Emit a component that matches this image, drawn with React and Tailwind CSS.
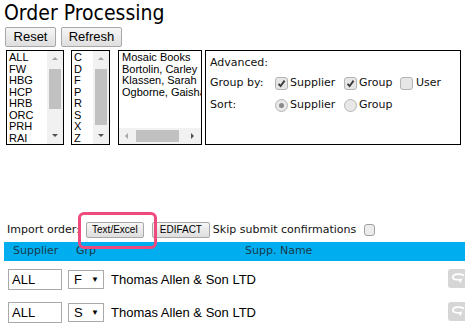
import React from 'react';

const tahoma = { fontFamily: '"DejaVu Sans Condensed", "DejaVu Sans", sans-serif' };
const verdana = { fontFamily: '"DejaVu Sans", sans-serif' };
const arial = { fontFamily: '"Liberation Sans", Arial, sans-serif' };

const Arrow = ({ dir }) => {
  const pts = {
    up: '1,5 4,2 7,5',
    down: '1,2 4,5 7,2',
    left: '5,1 2,4 5,7',
    right: '2,1 5,4 2,7',
  }[dir];
  return (
    <svg width="8" height="8" viewBox="0 0 8 8">
      <polygon points={pts} fill={dir === 'up' || dir === 'left' ? '#a3a3a3' : '#505050'} />
    </svg>
  );
};

const VScroll = ({ thumbTop, thumbHeight }) => (
  <div className="w-[16px] h-full bg-[#f1f1f1] flex flex-col items-center">
    <div className="h-[16px] flex items-center justify-center"><Arrow dir="up" /></div>
    <div className="flex-1 w-full relative">
      <div
        className="absolute left-[2px] right-[2px] bg-[#c1c1c1]"
        style={{ top: thumbTop, height: thumbHeight }}
      />
    </div>
    <div className="h-[16px] flex items-center justify-center"><Arrow dir="down" /></div>
  </div>
);

const ListBox = ({ items, width, thumbTop, thumbHeight }) => (
  <div className={`border border-black h-[95px] flex overflow-hidden bg-white ${width}`}>
    <div className="flex-1 pl-[2px] pt-[1px] text-[11px] leading-[11.5px] text-black overflow-hidden" style={arial}>
      {items.map((it) => (
        <div key={it}>{it}</div>
      ))}
    </div>
    <VScroll thumbTop={thumbTop} thumbHeight={thumbHeight} />
  </div>
);

const Check = ({ checked }) => (
  <span className="inline-flex w-[13px] h-[13px] rounded-[3px] border border-[#b4b4b4] bg-[#e6e6e6] items-center justify-center shrink-0">
    {checked && (
      <svg width="9" height="9" viewBox="0 0 9 9">
        <path d="M1.5 4.8 L3.6 7 L7.6 1.6" fill="none" stroke="#3a3a3a" strokeWidth="1.8" />
      </svg>
    )}
  </span>
);

const Radio = ({ checked }) => (
  <span className="inline-flex w-[13px] h-[13px] rounded-full border border-[#b4b4b4] bg-[#e8e8e8] items-center justify-center shrink-0">
    {checked && <span className="w-[5px] h-[5px] rounded-full bg-[#8a8a8a]" />}
  </span>
);

const GrayBtn = ({ children, className }) => (
  <button
    className={`border border-[#a8a8a8] rounded-[2px] bg-gradient-to-b from-[#f6f6f6] to-[#dedede] text-black ${className}`}
    style={arial}
  >
    {children}
  </button>
);

const OrderRow = ({ grp }) => (
  <div className="flex items-center h-[33px] pl-[8px] relative">
    <div className="w-[54px] h-[21px] border border-[#a9a9a9] text-[13px] leading-[19px] pl-[3px] text-black" style={arial}>
      ALL
    </div>
    <div className="ml-[6px] w-[36px] h-[19px] border border-[#a9a9a9] flex items-center text-[13px] text-black" style={arial}>
      <span className="pl-[5px] w-[22px]">{grp}</span>
      <span className="text-[8px]">▼</span>
    </div>
    <span className="ml-[7px] text-[13px] text-black" style={arial}>Thomas Allen &amp; Son LTD</span>
    <div className="absolute left-[448px] top-[6px] w-[30px] h-[19px] rounded-[3px] bg-[#d6d6d6] flex items-center pl-[3px]">
      <svg width="14" height="11" viewBox="0 0 14 11">
        <path d="M13 2.5 C9 0.5 3 0.5 2 3.5 C1 6.5 6 7.5 10 6.5 L9 9.5" fill="none" stroke="#fff" strokeWidth="1.8" />
      </svg>
    </div>
  </div>
);

export default function App() {
  return (
    <div className="w-[465px] h-[328px] overflow-hidden bg-white relative">
      <h1 className="text-[21px] leading-[26px] pl-[4px] text-black" style={tahoma}>
        Order Processing
      </h1>

      <div className="flex gap-[5px] pl-[5px] mt-[1px]">
        <GrayBtn className="w-[51px] h-[20px] text-[13px] leading-[18px]">Reset</GrayBtn>
        <GrayBtn className="w-[61px] h-[20px] text-[13px] leading-[18px]">Refresh</GrayBtn>
      </div>

      <div className="flex items-start mt-[3px] pl-[6px]">
        <ListBox
          width="w-[58px]"
          items={['ALL', 'FW', 'HBG', 'HCP', 'HRB', 'ORC', 'PRH', 'RAI']}
          thumbTop={2}
          thumbHeight={40}
        />
        <div className="w-[7px]" />
        <ListBox
          width="w-[39px]"
          items={['C', 'D', 'F', 'P', 'R', 'S', 'X', 'Z']}
          thumbTop={2}
          thumbHeight={56}
        />
        <div className="w-[8px]" />
        <div className="w-[84px] h-[95px] border border-black flex flex-col overflow-hidden">
          <div className="flex-1 pl-[3px] pt-[1px] text-[11px] leading-[11.5px] text-black whitespace-nowrap overflow-hidden" style={arial}>
            <div>Mosaic Books</div>
            <div>Bortolin, Carley</div>
            <div>Klassen, Sarah</div>
            <div>Ogborne, Gaisha</div>
          </div>
          <div className="h-[16px] bg-[#f1f1f1] flex items-center">
            <div className="w-[16px] flex justify-center"><Arrow dir="left" /></div>
            <div className="flex-1 h-full relative">
              <div className="absolute top-[2px] bottom-[2px] left-[1px] w-[43px] bg-[#c1c1c1]" />
            </div>
            <div className="w-[16px] flex justify-center"><Arrow dir="right" /></div>
          </div>
        </div>
        <div className="w-[3px]" />
        <div className="w-[256px] h-[95px] border border-black pl-[4px] pt-[2px] text-[11px] text-[#111]" style={verdana}>
          <div className="h-[20px] leading-[20px]">Advanced:</div>
          <div className="flex items-center h-[20px]">
            <span className="w-[65px]">Group by:</span>
            <Check checked />
            <span className="ml-[2px] w-[54px]">Supplier</span>
            <Check checked />
            <span className="ml-[2px] w-[41px]">Group</span>
            <Check />
            <span className="ml-[3px]">User</span>
          </div>
          <div className="flex items-center h-[24px]">
            <span className="w-[65px]">Sort:</span>
            <Radio checked />
            <span className="ml-[2px] w-[54px]">Supplier</span>
            <Radio />
            <span className="ml-[2px]">Group</span>
          </div>
        </div>
      </div>

      <div className="h-[77px]" />

      <div className="flex items-center h-[16px] pl-[7px] text-[11px] text-[#111] relative" style={verdana}>
        <span>Import order:</span>
        <GrayBtn className="ml-[6px] w-[58px] h-[16px] text-[10px] leading-[14px]">Text/Excel</GrayBtn>
        <GrayBtn className="ml-[8px] w-[58px] h-[16px] text-[10px] leading-[14px]">EDIFACT</GrayBtn>
        <span className="ml-[3px]">Skip submit confirmations</span>
        <span className="ml-[8px] inline-flex w-[11px] h-[12px] rounded-[3px] border border-[#a0a0a0] bg-[#ececec]" />
        <div className="absolute left-[78px] top-[-10px] w-[79px] h-[37px] rounded-[6px] border-[3px] border-[#ef4a7e]" />
      </div>

      <div className="mt-[4px] ml-[4px] h-[19px] bg-[#00aeef] flex items-center text-[11px] text-[#183a4c]" style={verdana}>
        <span className="pl-[9px] w-[72px]">Supplier</span>
        <span className="w-[169px]">Grp</span>
        <span>Supp. Name</span>
      </div>

      <div className="h-[2px]" />
      <OrderRow grp="F" />
      <OrderRow grp="S" />
    </div>
  );
}
